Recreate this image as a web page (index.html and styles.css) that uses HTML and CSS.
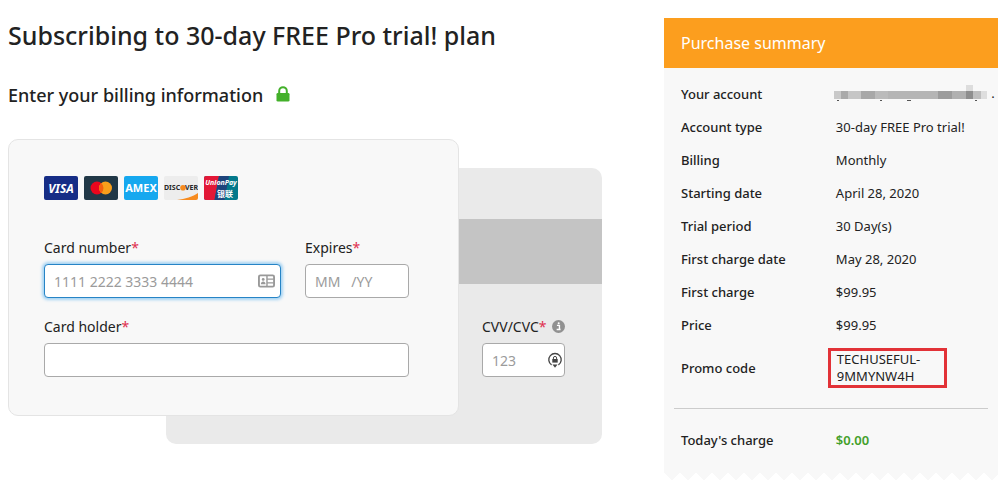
FILE: index.html
```html
<!DOCTYPE html>
<html lang="en">
<head>
<meta charset="utf-8">
<meta name="viewport" content="width=device-width, initial-scale=1">
<title>Subscribe</title>
<link rel="stylesheet" href="styles.css">
</head>
<body>
<div class="page">
  <main class="billing">
    <h1 class="title">Subscribing to 30-day FREE Pro trial! plan</h1>
    <h2 class="subtitle">Enter your billing information
      <svg class="lock" viewBox="0 0 14 16" aria-hidden="true"><path d="M3.200 8V5a3.800 3.800 0 0 1 7.600 0v3" fill="none" stroke="#43b02a" stroke-width="2"/><rect x="0.500" y="7" width="13" height="8.500" rx="1.300" fill="#43b02a"/></svg>
    </h2>
    <form class="cards">
      <section class="card-back">
        <div class="stripe"></div>
        <div class="field cvv">
          <label for="cvv">CVV/CVC<span class="req">*</span>
            <svg class="info" viewBox="0 0 14 14" aria-hidden="true"><circle cx="7" cy="7" r="7" fill="#919191"/><path d="M5.300 5.800h2.700v4h1M5 10.300h4.200" stroke="#fff" stroke-width="1.500" fill="none"/><circle cx="7.200" cy="3.500" r="1.100" fill="#fff"/></svg>
          </label>
          <div class="control">
            <input id="cvv" type="text" placeholder="123">
            <svg class="cvv-icon" viewBox="0 0 16 16" aria-hidden="true"><path d="M4.600 12.900A6.200 6.200 0 1 1 11.400 12.900" fill="none" stroke="#444" stroke-width="1.300"/><path d="M5.500 12.500h5L8 15.800z" fill="#444"/><rect x="5.300" y="7" width="5.400" height="3.600" fill="#444"/><path d="M6.400 7.200V6a1.600 1.600 0 0 1 3.200 0V7.200" fill="none" stroke="#444" stroke-width="1"/></svg>
          </div>
        </div>
      </section>
      <section class="card-front">
        <div class="brands">
          <svg class="brand" viewBox="0 0 34 24" role="img" aria-label="Visa"><rect width="34" height="24" rx="2" fill="#162d86"/><text x="17" y="16.500" text-anchor="middle" font-size="12" font-weight="700" font-style="italic" fill="#fff">VISA</text></svg>
          <svg class="brand" viewBox="0 0 34 24" role="img" aria-label="Mastercard"><rect width="34" height="24" rx="2" fill="#213847"/><circle cx="13" cy="12" r="6.500" fill="#e8061d"/><circle cx="21.500" cy="12" r="6.500" fill="#f99f1b"/><path d="M17.250 7.100a6.500 6.500 0 0 1 0 9.800a6.500 6.500 0 0 1 0-9.800z" fill="#f4600f"/></svg>
          <svg class="brand" viewBox="0 0 34 24" role="img" aria-label="American Express"><rect width="34" height="24" rx="2" fill="#16a8ef"/><text x="17" y="16" text-anchor="middle" font-size="11" font-weight="700" fill="#fff">AMEX</text></svg>
          <svg class="brand" viewBox="0 0 34 24" role="img" aria-label="Discover"><rect width="34" height="24" rx="2" fill="#ededed"/><path d="M13 24c8-1 16-3.500 21-7v5a2 2 0 0 1-2 2z" fill="#f68b1f"/><text x="0" y="14.300" font-size="7" font-weight="700" fill="#262626">DISC</text><circle cx="19" cy="11.800" r="2.800" fill="#f68b1f"/><text x="34" y="14.300" text-anchor="end" font-size="7" font-weight="700" fill="#262626">VER</text></svg>
          <svg class="brand" viewBox="0 0 34 24" role="img" aria-label="UnionPay"><rect width="34" height="24" rx="2" fill="#03798b"/><path d="M2 0h13l-4.500 24H2a2 2 0 0 1-2-2V2a2 2 0 0 1 2-2z" fill="#e21837"/><path d="M15 0h10l-4.500 24h-10z" fill="#1e447c"/><text x="17" y="9" text-anchor="middle" font-size="7" font-weight="700" font-style="italic" fill="#fff">UnionPay</text><text class="cjk" x="21" y="20.500" text-anchor="middle" font-size="8" font-weight="700" fill="#fff">银联</text></svg>
        </div>
        <div class="row">
          <div class="field number">
            <label for="number">Card number<span class="req">*</span></label>
            <div class="control">
              <input id="number" class="focused" type="text" placeholder="1111 2222 3333 4444">
              <svg class="id-icon" viewBox="0 0 18 14" aria-hidden="true"><rect x="1" y="1" width="16" height="12" rx="1.500" fill="none" stroke="#999" stroke-width="2"/><path d="M9.500 1v12M10 5h6.500M10 9h6.500" stroke="#999" stroke-width="1.500"/><circle cx="5.500" cy="5.300" r="1.500" fill="#999"/><path d="M3 10.500c0-4 5-4 5 0z" fill="#999"/></svg>
            </div>
          </div>
          <div class="field expires">
            <label for="expires">Expires<span class="req">*</span></label>
            <input id="expires" type="text" placeholder="MM &nbsp; /YY">
          </div>
        </div>
        <div class="field">
          <label for="holder">Card holder<span class="req">*</span></label>
          <input id="holder" type="text">
        </div>
      </section>
    </form>
  </main>
  <aside class="summary">
    <h2 class="summary-title">Purchase summary</h2>
    <div class="summary-body">
      <table>
        <tbody>
        <tr><th scope="row">Your account</th><td class="account"><svg class="redacted" viewBox="0 0 154 20" role="img" aria-label="Hidden"><rect x="0" y="6" width="8" height="8" fill="#c9c9c9"/><rect x="7" y="6" width="7" height="8" fill="#aaa"/><rect x="14" y="6" width="13" height="8" fill="#c6c6c6"/><rect x="27" y="6" width="14" height="8" fill="#a8a8a8"/><rect x="41" y="6" width="13" height="8" fill="#bbb"/><rect x="54" y="6" width="50" height="8" fill="#b5b5b5"/><rect x="104" y="6" width="14" height="8" fill="#9c9c9c"/><rect x="118" y="6" width="14" height="8" fill="#b0b0b0"/><rect x="132" y="0" width="7" height="6" fill="#ddd"/><rect x="132" y="6" width="7" height="8" fill="#8e8e8e"/><rect x="139" y="6" width="8" height="8" fill="#bebebe"/><rect x="147" y="6" width="6" height="8" fill="#dedede"/><path d="M3 15.500h2M46 15.500h2M73 15.500h4M141 15.500h2" stroke="#555"/></svg> .</td></tr>
        <tr><th scope="row">Account type</th><td>30-day FREE Pro trial!</td></tr>
        <tr><th scope="row">Billing</th><td>Monthly</td></tr>
        <tr><th scope="row">Starting date</th><td>April 28, 2020</td></tr>
        <tr><th scope="row">Trial period</th><td>30 Day(s)</td></tr>
        <tr><th scope="row">First charge date</th><td>May 28, 2020</td></tr>
        <tr><th scope="row">First charge</th><td>$99.95</td></tr>
        <tr><th scope="row">Price</th><td>$99.95</td></tr>
        <tr class="promo"><th scope="row">Promo code</th><td><div class="code">TECHUSEFUL-<br>9MMYNW4H</div></td></tr>
        </tbody>
        <tbody class="total">
        <tr><th scope="row">Today's charge</th><td>$0.00</td></tr>
        </tbody>
      </table>
    </div>
    <div class="zigzag"></div>
  </aside>
</div>
</body>
</html>
```
FILE: styles.css
```css
* {
  box-sizing: border-box;
}

body {
  margin: 0;
  background: #fff;
  color: #222;
  font: 14px/20px "Noto Sans", "Open Sans", sans-serif;
}

h1,
h2 {
  margin: 0;
}

.page {
  display: grid;
  grid-template-columns: 594fr 334fr;
  gap: 62px;
  align-items: start;
  padding: 18px 2px 0 8px;
}

.title {
  font-size: 25px;
  line-height: 34px;
  font-weight: 500;
  white-space: nowrap;
}

.subtitle {
  margin-top: 30px;
  font-size: 18px;
  line-height: 26px;
  font-weight: 500;
}

.lock {
  width: 14px;
  height: 16px;
  margin-left: 8px;
}

.cards {
  display: grid;
  grid-template-columns: 158fr 293fr 143fr;
  grid-template-rows: 29px auto 28px;
  margin-top: 31px;
}

.card-front {
  grid-area: 1 / 1 / 3 / 3;
  display: flex;
  flex-direction: column;
  padding: 36px 49px 38px 35px;
  background: #f8f8f8;
  border: 1px solid #e4e4e4;
  border-radius: 10px;
}

.card-back {
  grid-area: 2 / 2 / 4 / 4;
  display: flex;
  flex-direction: column;
  background: #eaeaea;
  border-radius: 10px;
}

.stripe {
  height: 65px;
  margin-top: 51px;
  background: #c4c4c4;
}

.cvv {
  width: 83px;
  margin: 33px 37px 0 auto;
}

.brands {
  display: flex;
  gap: 6px;
  margin-bottom: 38px;
}

.brand {
  width: 34px;
  height: 24px;
  font-family: "Noto Sans", sans-serif;
}

.cjk {
  font-family: "Noto Sans CJK SC", sans-serif;
}

.row {
  display: flex;
  gap: 24px;
  margin-bottom: 19px;
}

.number {
  flex: 237;
}

.expires {
  flex: 104;
}

.field {
  min-width: 0;
}

.field label {
  display: block;
  margin-bottom: 6px;
  white-space: nowrap;
}

.req {
  color: #e0304f;
}

.control {
  position: relative;
}

input {
  display: block;
  width: 100%;
  height: 34px;
  padding: 0 9px;
  border: 1px solid #a9a9a9;
  border-radius: 4px;
  background: #fff;
  color: #222;
  font: inherit;
}

input::placeholder {
  color: #9b9b9b;
}

.focused {
  border-color: #2684c6;
  box-shadow: 0 0 3px 2px #a5d3f3;
}

.id-icon {
  position: absolute;
  top: 10px;
  right: 6px;
  width: 17px;
  height: 14px;
}

.cvv-icon {
  position: absolute;
  top: 9px;
  right: 2px;
  width: 16px;
  height: 16px;
}

.info {
  width: 13px;
  height: 13px;
  margin-left: 2px;
  vertical-align: -1px;
}

.summary-title {
  padding: 12px 17px;
  background: #fc9e1e;
  color: #fff;
  font-size: 16px;
  line-height: 26px;
  font-weight: 400;
}

.summary-body {
  padding: 10px 10px 0;
  background: #f8f8f8;
}

table {
  width: 100%;
  border-collapse: collapse;
  table-layout: fixed;
  font-size: 13px;
  line-height: 17px;
}

th,
td {
  height: 33px;
  padding: 0;
  text-align: left;
  white-space: nowrap;
}

th {
  width: 49%;
  padding-left: 7px;
  font-weight: 500;
}

td {
  padding-left: 8px;
}

.account {
  padding-left: 6px;
}

.redacted {
  width: 154px;
  height: 20px;
  vertical-align: middle;
}

.promo th,
.promo td {
  height: 52px;
}

.promo td {
  padding-left: 0;
}

.code {
  width: 119px;
  padding: 0 6px;
  border: 3px solid #e23237;
}

.total::before {
  content: "";
  display: table-row;
  height: 14px;
}

.total tr {
  border-top: 1px solid #ccc;
}

.total th,
.total td {
  height: 64px;
}

.total td {
  color: #43a02a;
  font-weight: 600;
}

.zigzag {
  height: 8px;
  background: conic-gradient(from -45deg at 50% 100%, #f8f8f8 90deg, #fff 0) 0 0 / 16px 8px;
}
```
